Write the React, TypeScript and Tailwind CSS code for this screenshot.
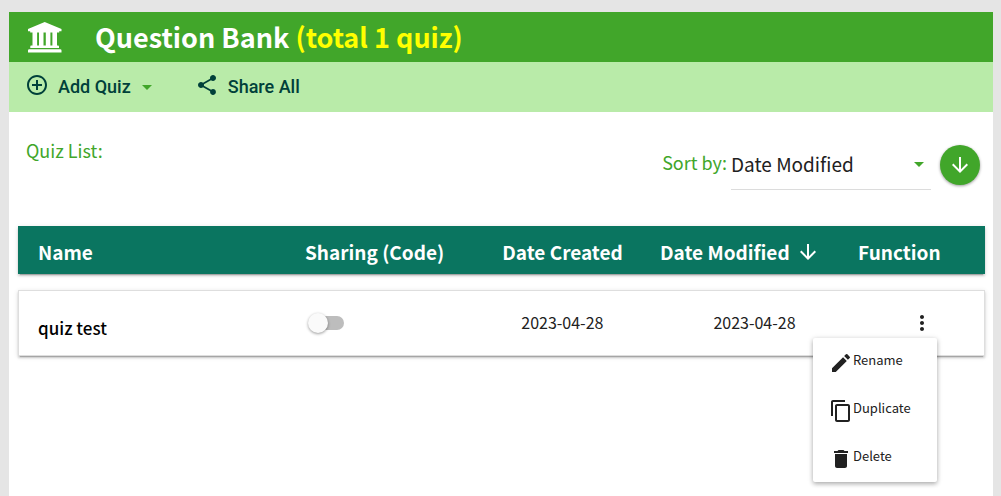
import { useState } from "react"
import type { IconType } from "react-icons"
import {
  MdAddCircleOutline,
  MdArrowDownward,
  MdArrowDropDown,
  MdContentCopy,
  MdDelete,
  MdEdit,
  MdMoreVert,
  MdShare,
} from "react-icons/md"

interface Quiz {
  id: number
  name: string
  shared: boolean
  created: string
  modified: string
}

const QUIZZES: Quiz[] = [
  {
    id: 1,
    name: "quiz test",
    shared: false,
    created: "2023-04-28",
    modified: "2023-04-28",
  },
]

const ACTIONS: { label: string; icon: IconType }[] = [
  { label: "Rename", icon: MdEdit },
  { label: "Duplicate", icon: MdContentCopy },
  { label: "Delete", icon: MdDelete },
]

const ROW =
  "grid grid-cols-[287fr_160fr_195fr_198fr_127fr] items-center shadow-[0_3px_1px_-2px_rgba(0,0,0,0.2),0_2px_2px_rgba(0,0,0,0.14),0_1px_5px_rgba(0,0,0,0.12)]"

export default function App() {
  const [sort, setSort] = useState("modified")

  return (
    <div className="flex min-h-screen flex-col bg-[#e5e5e5] pt-3 pr-2 pl-[9px] font-['Noto_Sans_CJK_TC',sans-serif] text-[#212121]">
      <header className="flex h-[50px] items-center bg-[#41a62a] pl-[19px] text-white">
        <BankIcon />
        <h1 className="ml-[33px] text-[27px] leading-8 font-bold">
          Question Bank <span className="text-[#ffff00]">(total 1 quiz)</span>
        </h1>
      </header>

      <div className="flex h-[50px] items-center bg-[#b9eba9] pl-4 font-[Roboto,sans-serif] text-lg font-medium text-[#00403a]">
        <button type="button" className="flex items-center">
          <MdAddCircleOutline className="mb-1 size-6" />
          <span className="ml-[9px]">Add Quiz</span>
          <MdArrowDropDown className="ml-1 size-6 text-[#41a62a]" />
        </button>
        <button type="button" className="ml-9 flex items-center">
          <MdShare className="mb-1 size-6" />
          <span className="ml-[9px]">Share All</span>
        </button>
      </div>

      <main className="flex-1 bg-white pr-2 pl-[9px]">
        <div className="flex justify-between pt-[26px] pl-2">
          <h2 className="text-lg leading-6 text-[#41a62a]">Quiz List:</h2>
          <div className="flex pt-[6px]">
            <label
              htmlFor="sort"
              className="mt-[6px] mr-1 text-lg leading-6 text-[#41a62a]"
            >
              Sort by:
            </label>
            <div className="relative h-[46px] w-[200px] border-b border-[#dcdcdc]">
              <select
                id="sort"
                value={sort}
                onChange={(e) => setSort(e.target.value)}
                className="h-10 w-full appearance-none bg-transparent text-[19px] outline-none"
              >
                <option value="modified">Date Modified</option>
                <option value="created">Date Created</option>
                <option value="name">Name</option>
              </select>
              <MdArrowDropDown className="pointer-events-none absolute top-2 right-0 size-6 text-[#41a62a]" />
            </div>
            <button
              type="button"
              aria-label="Sort descending"
              className="mt-px mr-[5px] ml-[9px] flex size-10 items-center justify-center rounded-full bg-[#41a62a] text-white shadow-[0_1px_3px_rgba(0,0,0,0.4)]"
            >
              <MdArrowDownward className="size-6" />
            </button>
          </div>
        </div>

        <table className="mt-9 block">
          <thead className="block">
            <tr
              className={`${ROW} h-12 bg-[#0a7560] pt-1 text-left text-[19px] leading-6 text-white`}
            >
              <th className="pl-5">Name</th>
              <th>Sharing (Code)</th>
              <th className="text-center">Date Created</th>
              <th className="flex items-center gap-[6px]">
                Date Modified
                <MdArrowDownward className="size-6" />
              </th>
              <th>Function</th>
            </tr>
          </thead>
          <tbody className="mt-4 block">
            {QUIZZES.map((quiz) => (
              <QuizRow key={quiz.id} quiz={quiz} />
            ))}
          </tbody>
        </table>
      </main>
    </div>
  )
}

function QuizRow({ quiz }: { quiz: Quiz }) {
  const [shared, setShared] = useState(quiz.shared)
  const [menuOpen, setMenuOpen] = useState(true)

  return (
    <tr
      className={`${ROW} relative h-[66px] border border-[#dedede] bg-white pb-[2px] text-base leading-6`}
    >
      <td className="pt-3 pl-[19px] text-[17px] leading-6 font-medium text-black">
        {quiz.name}
      </td>
      <td className="pt-[2px]">
        <label className="relative flex h-5 w-10 items-center pl-1">
          <input
            type="checkbox"
            role="switch"
            aria-label="Sharing"
            checked={shared}
            onChange={(e) => setShared(e.target.checked)}
            className="peer h-[14px] w-[35px] appearance-none rounded-full bg-[#bdbdbd] checked:bg-[#a0d394]"
          />
          <span className="absolute left-[3px] size-5 rounded-full bg-[#fafafa] shadow-[0_1px_3px_rgba(0,0,0,0.4)] peer-checked:translate-x-4 peer-checked:bg-[#41a62a]" />
        </label>
      </td>
      <td className="text-center">{quiz.created}</td>
      <td className="pr-2 text-center">{quiz.modified}</td>
      <td className="pl-[2px] text-center">
        <button
          type="button"
          aria-label="Quiz options"
          aria-expanded={menuOpen}
          onClick={() => setMenuOpen(!menuOpen)}
          className="align-middle"
        >
          <MdMoreVert className="size-6" />
        </button>
        {menuOpen && (
          <div
            role="menu"
            className="absolute top-[47px] right-[47px] w-[124px] rounded-xs bg-white shadow-[0_2px_4px_rgba(0,0,0,0.24),0_1px_6px_rgba(0,0,0,0.14)]"
          >
            {ACTIONS.map(({ label, icon: Icon }) => (
              <button
                key={label}
                type="button"
                role="menuitem"
                className="flex h-12 w-full items-center pb-1 pl-4 text-[13px] leading-5"
              >
                <Icon className="mt-[6px] size-6" />
                {label}
              </button>
            ))}
          </div>
        )}
      </td>
    </tr>
  )
}

function BankIcon() {
  return (
    <svg
      viewBox="0 0 34 31"
      className="h-[31px] w-[34px]"
      fill="currentColor"
      aria-hidden="true"
    >
      <path d="M16.7 0 33.5 7v2.2h-2.3v1.2H2.2V9.2H0V7z" />
      <path d="M4.5 10h4.6v14H4.5zM11 10h4.5v14H11zM17.8 10h4.6v14h-4.6zM24.4 10H29v14h-4.6z" />
      <path d="M3.5 23.5H30a1 1 0 0 1 1 1V26H2.3v-1.5a1 1 0 0 1 1.2-1zM1.2 27.2h31.1a1.2 1.2 0 0 1 1.2 1.2v2H0v-2a1.2 1.2 0 0 1 1.2-1.2z" />
    </svg>
  )
}
